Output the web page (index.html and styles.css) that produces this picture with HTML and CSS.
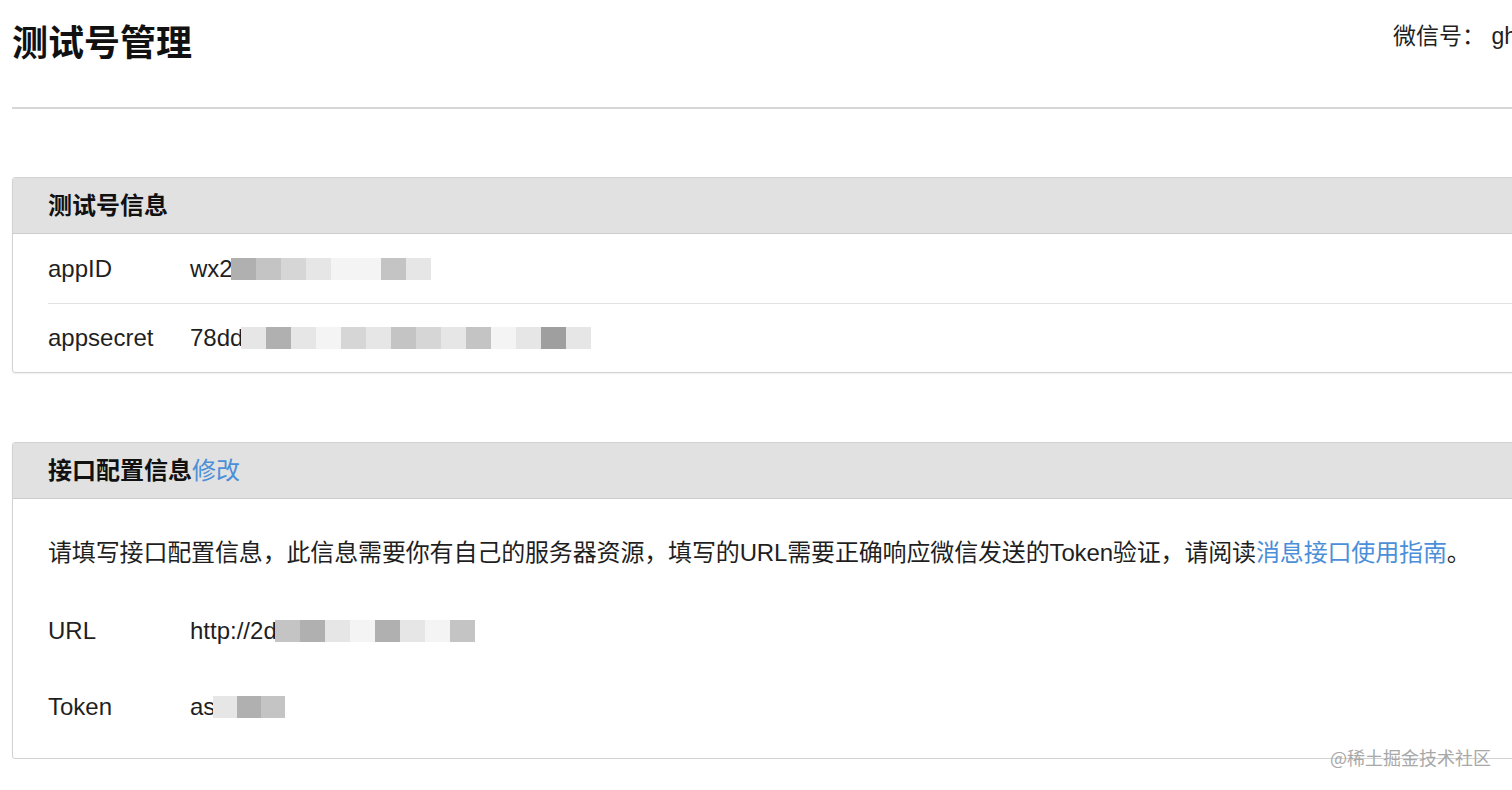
FILE: index.html
```html
<!DOCTYPE html>
<html lang="zh-CN">
<head>
    <meta charset="UTF-8">
    <meta name="viewport" content="width=device-width, initial-scale=1.0">
    <title>测试号管理</title>
    <link rel="stylesheet" href="styles.css">
</head>
<body>
    <div class="page">
        <div class="page-header">
            <h1>测试号管理</h1>
            <div class="account">微信号：&nbsp;gh_3c5a1e0b7d21</div>
        </div>

        <div class="panel info-panel">
            <div class="panel-title">测试号信息</div>
            <div class="panel-body">
                <div class="row">
                    <div class="label">appID</div>
                    <div class="value">wx2<span class="mask">
                        <i class="m2"></i><i class="m3"></i><i class="m4"></i><i class="m5"></i><i class="m6"></i><i class="m6"></i><i class="m3"></i><i class="m5"></i>
                    </span></div>
                </div>
                <div class="row">
                    <div class="label">appsecret</div>
                    <div class="value">78dd<span class="mask">
                        <i class="m5"></i><i class="m2"></i><i class="m5"></i><i class="m6"></i><i class="m4"></i><i class="m5"></i><i class="m3"></i><i class="m4"></i><i class="m5"></i><i class="m3"></i><i class="m6"></i><i class="m5"></i><i class="m1"></i><i class="m5"></i>
                    </span></div>
                </div>
            </div>
        </div>

        <div class="panel config-panel">
            <div class="panel-title">接口配置信息<a href="#">修改</a></div>
            <div class="panel-body">
                <p class="desc">请填写接口配置信息，此信息需要你有自己的服务器资源，填写的URL需要正确响应微信发送的Token验证，请阅读<a href="#">消息接口使用指南</a>。</p>
                <div class="row plain">
                    <div class="label">URL</div>
                    <div class="value">http://2d<span class="mask">
                        <i class="m3"></i><i class="m2"></i><i class="m5"></i><i class="m6"></i><i class="m2"></i><i class="m5"></i><i class="m6"></i><i class="m3"></i>
                    </span></div>
                </div>
                <div class="row plain">
                    <div class="label">Token</div>
                    <div class="value">as<span class="mask short">
                        <i class="m5"></i><i class="m2"></i><i class="m3"></i>
                    </span></div>
                </div>
            </div>
        </div>
    </div>
    <div class="watermark">@稀土掘金技术社区</div>
</body>
</html>
```

FILE: styles.css
```css
:root {
    --text-color: #1f1f1f;
    --link-color: #4b8fd8;
    --line-color: #d6d6d6;
    --head-bg: #e1e1e1;
}
html, body {
    overflow: hidden;
}
body {
    margin: 0;
    background: #ffffff;
    color: var(--text-color);
    font-family: "Liberation Sans", "Noto Sans CJK SC", sans-serif;
    font-size: 24px;
}
.page {
    width: 1640px;
    padding-left: 12px;
}
.page-header {
    display: flex;
    align-items: flex-start;
    height: 85px;
    padding-top: 22px;
    border-bottom: 2px solid var(--line-color);
}
.page-header h1 {
    margin: 0;
    font-size: 36px;
    line-height: 44px;
    font-weight: bold;
    color: #111;
}
.account {
    margin-left: auto;
    width: 259px;
    margin-top: -2px;
    line-height: 32px;
    font-size: 23px;
    white-space: nowrap;
    overflow: hidden;
}
.panel {
    border: 1px solid #d2d2d2;
    border-radius: 3px;
    box-shadow: 0 1px 2px rgba(0, 0, 0, 0.06);
}
.info-panel {
    margin-top: 68px;
}
.config-panel {
    margin-top: 69px;
}
.panel-title {
    height: 55px;
    line-height: 55px;
    padding-left: 35px;
    background: var(--head-bg);
    border-bottom: 1px solid #cccccc;
    font-weight: bold;
    color: #111;
}
.panel-title a {
    font-weight: normal;
}
a {
    color: var(--link-color);
    text-decoration: none;
}
.panel-body {
    padding: 0 0 0 35px;
}
.row {
    display: flex;
    align-items: center;
    height: 69px;
    box-sizing: border-box;
}
.row + .row {
    border-top: 1px solid #e2e2e2;
}
.row.plain {
    height: 76px;
    border-top: none;
}
.label {
    width: 142px;
}
.value {
    display: flex;
    align-items: center;
}
.mask {
    display: inline-flex;
    height: 22px;
    margin-left: -2px;
}
.mask i {
    display: block;
    width: 25px;
    height: 100%;
}
.mask.short i {
    width: 24px;
}
.m1 { background: #9f9f9f; }
.m2 { background: #b0b0b0; }
.m3 { background: #c4c4c4; }
.m4 { background: #d6d6d6; }
.m5 { background: #e6e6e6; }
.m6 { background: #f4f4f4; }
.config-panel .panel-body {
    padding-top: 36px;
    padding-bottom: 13px;
}
.desc {
    margin: 0 0 22px;
    line-height: 36px;
    white-space: nowrap;
    letter-spacing: -0.15px;
}
.watermark {
    position: absolute;
    left: 1330px;
    top: 745px;
    font-size: 18px;
    line-height: 24px;
    color: #a8a8a8;
    font-family: "Noto Sans CJK SC", sans-serif;
}
```
